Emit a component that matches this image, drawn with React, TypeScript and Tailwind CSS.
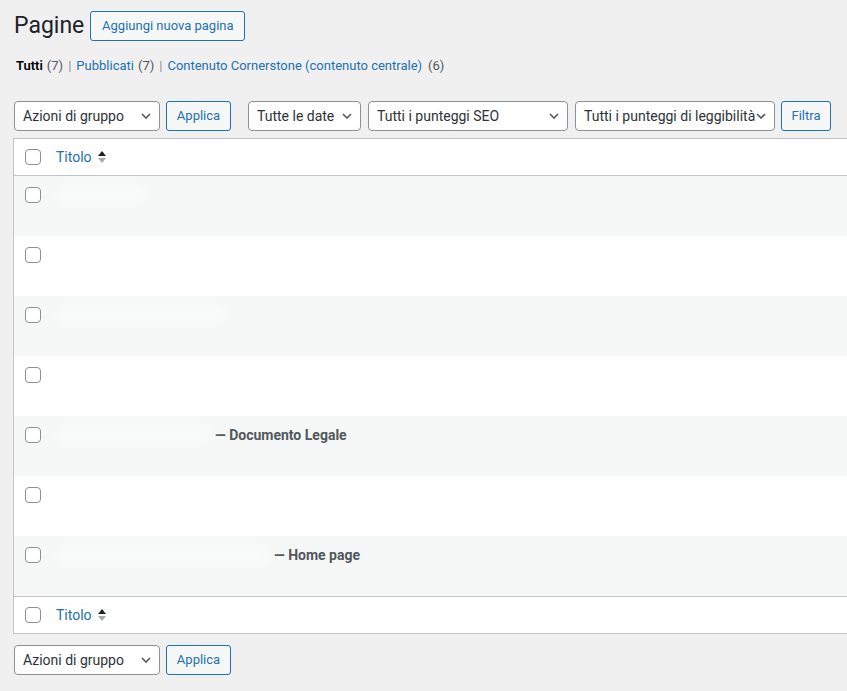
import React from "react";

function Chevron() {
  return (
    <svg width="10" height="6" viewBox="0 0 10 6" className="shrink-0">
      <path d="M1 1l4 4 4-4" fill="none" stroke="#50575e" strokeWidth="1.6" />
    </svg>
  );
}

function Select({ label, w }: { label: string; w: string }) {
  return (
    <div
      className={`flex h-[30px] ${w} items-center justify-between overflow-hidden rounded-[4px] border border-[#8c8f94] bg-white pl-2 pr-[8px] text-[14px] text-[#2c3338]`}
    >
      <span className="overflow-hidden whitespace-nowrap pr-[4px]">{label}</span>
      <Chevron />
    </div>
  );
}

function Button({ label, w }: { label: string; w: string }) {
  return (
    <button
      className={`flex h-[30px] ${w} items-center justify-center rounded-[3px] border border-[#2271b1] bg-[#f6f7f7] text-[13px] text-[#2271b1]`}
    >
      {label}
    </button>
  );
}

function Checkbox() {
  return <div className="h-4 w-4 shrink-0 rounded-[4px] border border-[#8c8f94] bg-white" />;
}

function SortIcon() {
  return (
    <svg width="10" height="14" viewBox="0 0 10 14" className="ml-[5px]">
      <path d="M1 6l4-5 4 5z" fill="#1d2327" />
      <path d="M1 8h8l-4 5z" fill="#a7aaad" />
    </svg>
  );
}

function HeadRow({ top }: { top?: boolean }) {
  return (
    <div
      className={`flex h-[37px] items-center ${
        top ? "border-b" : "border-t"
      } border-[#c3c4c7] bg-white pl-[11px]`}
    >
      <Checkbox />
      <span className="ml-[15px] text-[14px] text-[#2271b1]">Titolo</span>
      <SortIcon />
    </div>
  );
}

// titles are blurred out in the source, only the post states stay readable
const rows = [
  { blur: 90, state: "" },
  { blur: 250, state: "" },
  { blur: 170, state: "" },
  { blur: 150, state: "" },
  { blur: 155, state: "— Documento Legale" },
  { blur: 165, state: "" },
  { blur: 214, state: "— Home page" },
];

export default function App() {
  return (
    <div className="h-[691px] w-[847px] overflow-hidden bg-[#f0f0f1] font-['Roboto',sans-serif] text-[#3c434a]">
      <div className="pl-[14px] pt-[11px]">
        <div className="flex items-center">
          <h1 className="text-[23px] leading-[30px] text-[#1d2327]">Pagine</h1>
          <Button label="Aggiungi nuova pagina" w="ml-[6px] w-[155px]" />
        </div>

        <div className="mt-[15px] flex items-center text-[13px] leading-[20px]">
          <span className="ml-[2px] font-semibold text-black">Tutti</span>
          <span className="ml-[4px] text-[#50575e]">(7)</span>
          <span className="mx-[5px] text-[#8c8f94]">|</span>
          <span className="text-[#2271b1]">Pubblicati</span>
          <span className="ml-[4px] text-[#50575e]">(7)</span>
          <span className="mx-[5px] text-[#8c8f94]">|</span>
          <span className="text-[#2271b1]">Contenuto Cornerstone (contenuto centrale)</span>
          <span className="ml-[6px] text-[#50575e]">(6)</span>
        </div>

        <div className="mt-[25px] flex items-center">
          <Select label="Azioni di gruppo" w="w-[146px]" />
          <Button label="Applica" w="ml-[6px] w-[65px]" />
          <Select label="Tutte le date" w="ml-[17px] w-[113px]" />
          <Select label="Tutti i punteggi SEO" w="ml-[7px] w-[200px]" />
          <Select label="Tutti i punteggi di leggibilità" w="ml-[7px] w-[200px]" />
          <Button label="Filtra" w="ml-[6px] w-[50px]" />
        </div>
      </div>

      <div className="ml-[13px] mt-[7px] w-[900px] border border-[#c3c4c7] bg-white">
        <HeadRow top />
        {rows.map((r, i) => (
          <div
            key={i}
            className={`flex h-[60px] items-start pl-[11px] pt-[11px] ${
              i % 2 === 0 ? "bg-[#f6f7f7]" : "bg-white"
            }`}
          >
            <Checkbox />
            <div className="-mt-[2px] ml-[15px] flex h-[20px] items-center">
              <div
                className="h-[14px] rounded-full bg-white/60 blur-[7px]"
                style={{ width: r.blur }}
              />
              {r.state && (
                <span className="ml-[4px] whitespace-nowrap text-[14px] font-bold leading-[20px] text-[#50575e]">
                  {r.state}
                </span>
              )}
            </div>
          </div>
        ))}
        <HeadRow />
      </div>

      <div className="ml-[14px] mt-[11px] flex items-center">
        <Select label="Azioni di gruppo" w="w-[146px]" />
        <Button label="Applica" w="ml-[6px] w-[65px]" />
      </div>
    </div>
  );
}
